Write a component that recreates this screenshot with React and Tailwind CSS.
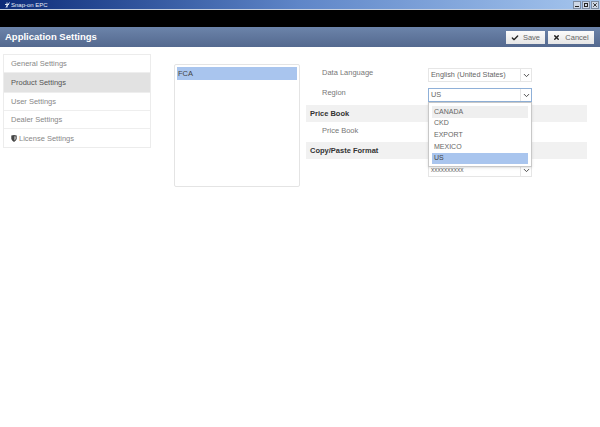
import { Check, X, ChevronDown } from "lucide-react";

const sideItems = [
  { label: "General Settings", h: "h-[18px]" },
  { label: "Product Settings", h: "h-[20px]", active: true },
  { label: "User Settings", h: "h-[18px]" },
  { label: "Dealer Settings", h: "h-[18px]" },
  { label: "License Settings", h: "h-[18px]", shield: true },
];

const regions = ["CANADA", "CKD", "EXPORT", "MEXICO", "US"];

function WinButton({ children }) {
  return (
    <div className="w-[8px] h-[8px] bg-[#cfd8e6] border border-[#7d8ba0] flex items-center justify-center text-[#222]">
      {children}
    </div>
  );
}

function Select({ value, focused, small }) {
  return (
    <div
      className={`w-[104px] h-[14px] flex items-center border bg-white ${
        focused ? "border-[#8fb0d8]" : "border-[#e6e6e6]"
      }`}
    >
      <span className={`flex-1 pl-[2px] leading-none text-[#666] whitespace-nowrap ${small ? "text-[6.5px]" : "text-[7.3px]"}`}>
        {value}
      </span>
      <span className="w-[11px] h-full border-l border-[#e6e6e6] flex items-center justify-center">
        <ChevronDown size={9} strokeWidth={2.5} className="text-[#444]" />
      </span>
    </div>
  );
}

export default function App() {
  return (
    <div className="w-[600px] h-[427px] bg-white overflow-hidden font-['Liberation_Sans',Arial,sans-serif]">
      {/* Window title */}
      <div className="h-[9px] flex items-center justify-between pl-[5px] pr-[1px] bg-gradient-to-r from-[#0d2a78] via-[#5f86c8] to-[#a6c6ee]">
        <span className="flex items-center gap-[1px] text-[6px] leading-none text-[#e8ecf5]">
          <svg width="5" height="6" viewBox="0 0 5 6" fill="none" stroke="#dfe6f2" strokeWidth="1">
            <path d="M4.5 0.5L1 5.5M2 0.5v5M0 2.5h4" />
          </svg>
          Snap-on EPC
        </span>
        <div className="flex gap-[1px]">
          <WinButton><span className="w-[4px] h-[1px] mt-[3px] bg-[#222]" /></WinButton>
          <WinButton><span className="w-[4px] h-[4px] border border-[#222]" /></WinButton>
          <WinButton><X size={6} strokeWidth={3.5} /></WinButton>
        </div>
      </div>
      <div className="h-[18px] bg-black border-t border-[#c4cedd]" />

      {/* Header */}
      <div className="h-[20px] flex items-center justify-between pl-[5px] pr-[6px] bg-gradient-to-b from-[#6c84aa] to-[#54698f]">
        <span className="text-[9.5px] font-bold text-white">Application Settings</span>
        <div className="flex gap-[3px] mt-[1px]">
          <button className="w-[39px] h-[13px] bg-gradient-to-b from-[#fbfbfb] to-[#e6e6e6] flex items-center justify-center gap-[4px] text-[7.5px] text-[#666]">
            <Check size={8} strokeWidth={4} className="text-[#222]" />
            Save
          </button>
          <button className="w-[46px] h-[13px] bg-gradient-to-b from-[#fbfbfb] to-[#e6e6e6] flex items-center justify-center gap-[5px] text-[7.5px] text-[#666]">
            <X size={7} strokeWidth={5} className="text-[#222]" />
            Cancel
          </button>
        </div>
      </div>

      <div className="flex items-start pl-[3px] pt-[7px]">
        {/* Sidebar */}
        <div className="w-[148px] border border-[#ececec] bg-white">
          {sideItems.map((item) => (
            <div
              key={item.label}
              className={`${item.h} flex items-center pl-[7px] pt-[1px] text-[7.5px] border-b border-[#eeeeee] last:border-b-0 ${
                item.active ? "bg-[#e2e2e2] text-[#555]" : "text-[#888]"
              }`}
            >
              {item.shield && (
                <svg width="6" height="7" viewBox="0 0 6 7" className="mr-[2px]">
                  <path d="M0.3 0.6L3 0.1l2.7 0.5v2.6C5.7 5 4.2 6.2 3 6.9 1.800 6.200 0.3 5 0.3 3.200z" fill="#444" />
                  <path d="M3.300 1.200l1.500 0.300v1.700c0 1-0.700 1.800-1.500 2.300z" fill="#bbb" />
                </svg>
              )}
              {item.label}
            </div>
          ))}
        </div>

        {/* Make list */}
        <div className="w-[126px] h-[123px] mt-[10px] ml-[23px] border border-[#e4e4e4] rounded-[2px] p-[2px] shrink-0">
          <div className="h-[13px] bg-[#a9c5ee] flex items-center pl-[1px] text-[7.5px] text-[#444]">FCA</div>
        </div>

        {/* Form */}
        <div className="w-[281px] ml-[6px] mt-[14px] relative">
          <div className="h-[14px] flex items-center justify-between pl-[16px] pr-[55px] text-[7.5px] text-[#777]">
            <span className="pb-[4px]">Data Language</span>
            <Select value="English (United States)" />
          </div>
          <div className="h-[14px] mt-[6px] flex items-center justify-between pl-[16px] pr-[55px] text-[7.5px] text-[#777]">
            <span className="pb-[4px]">Region</span>
            <Select value="US" focused />
          </div>
          <div className="h-[17px] mt-[3px] bg-[#f1f1f1] flex items-center pl-[4px] text-[7.5px] font-bold text-[#333]">Price Book</div>
          <div className="h-[20px] flex items-center pl-[16px] pb-[2px] text-[7.5px] text-[#777]">Price Book</div>
          <div className="h-[17px] bg-[#f1f1f1] flex items-center pl-[4px] pt-[1px] text-[7.5px] font-bold text-[#333]">Copy/Paste Format</div>
          <div className="mt-[4px] pl-[122px]">
            <Select value="xxxxxxxxxx" small />
          </div>

          {/* Open region dropdown */}
          <div className="absolute left-[122px] top-[34px] w-[104px] h-[65px] bg-white border border-[#c8c8c8] shadow-sm pt-[3px] px-[3px] text-[7px] text-[#666]">
            {regions.map((r, i) => (
              <div
                key={r}
                className={`h-[11.7px] flex items-center pl-[2px] ${i === 0 ? "bg-[#efefef]" : ""} ${i === 4 ? "bg-[#a9c5ee] text-[#444]" : ""}`}
              >
                {r}
              </div>
            ))}
          </div>
        </div>
      </div>
    </div>
  );
}
